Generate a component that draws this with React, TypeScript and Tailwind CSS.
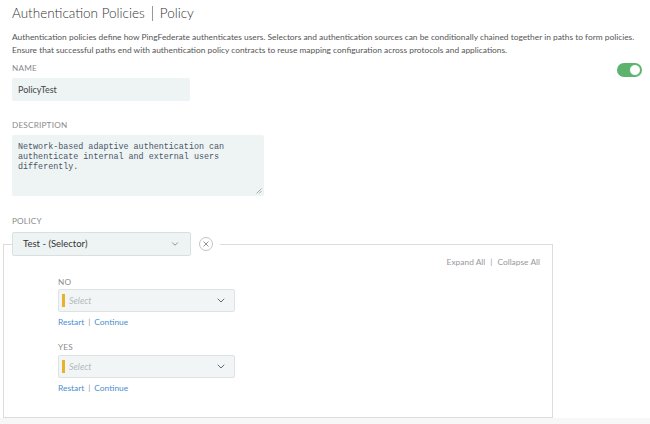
import { ChevronDown } from "lucide-react";

const ui = "font-['Lato','Open_Sans',sans-serif]";

function Label({ children, className = "" }: { children: string; className?: string }) {
  return (
    <div className={`text-[8.2px] leading-[12px] uppercase tracking-[0.2px] text-[#8a8a8a] ${className}`}>
      {children}
    </div>
  );
}

function Chevron() {
  return (
    <svg width="8" height="5" viewBox="0 0 8 5" fill="none">
      <path d="M1 1l3 3 3-3" stroke="#667" strokeWidth="1" strokeLinecap="round" strokeLinejoin="round" />
    </svg>
  );
}

function BranchSelect() {
  return (
    <div className="flex h-[23px] w-[177px] items-center rounded-[2px] border border-[#dde3e3] bg-[#f1f5f5] pl-[3px] pr-[9px]">
      <span className="h-[13px] w-[3px] bg-[#e8b32b]" />
      <span className="ml-[4px] flex-1 text-[9px] italic text-[#b4babd]">Select</span>
      <Chevron />
    </div>
  );
}

function Links({ className = "" }: { className?: string }) {
  return (
    <div className={`flex items-center text-[8.4px] leading-[12px] text-[#4a8fcf] ${className}`}>
      <span>Restart</span>
      <span className="mx-[4px] text-[#999]">|</span>
      <span>Continue</span>
    </div>
  );
}

export default function App() {
  return (
    <div className={`flex h-[424px] w-[650px] flex-col overflow-hidden bg-white ${ui}`}>
      <div className="pl-3 pr-2 pt-[3px]">
        <h1 className="flex items-center text-[13.5px] font-light leading-5 text-[#333]">
          <span>Authentication Policies</span>
          <span className="mx-[7px] h-[15px] w-px bg-[#999]" />
          <span>Policy</span>
        </h1>
        <p className="mt-[7.5px] whitespace-nowrap text-[8.4px] leading-[13px] text-[#555]">
          Authentication policies define how PingFederate authenticates users. Selectors and authentication
          sources can be conditionally chained together in paths to form policies.
          <br />
          Ensure that successful paths end with authentication policy contracts to reuse mapping configuration
          across protocols and applications.
        </p>

        <div className="mt-[5.5px] flex items-start justify-between">
          <Label>Name</Label>
          <div className="mt-[1px] flex h-[14px] w-[25px] items-center justify-end rounded-full bg-[#5bb36d] pr-[1px]">
            <span className="h-[12px] w-[12px] rounded-full border border-[#5bb36d] bg-white" />
          </div>
        </div>
        <div className="mt-[1px] flex h-[23px] w-[178px] items-center rounded-[2px] bg-[#eef4f4] pl-[6px] text-[9px] text-[#444]">
          PolicyTest
        </div>

        <Label className="mt-[18px]">Description</Label>
        <div className="relative mt-[4px] h-[61px] w-[252px] rounded-[2px] bg-[#eef4f4] px-[6px] pt-[8px] font-['Liberation_Mono',monospace] text-[8.4px] leading-[9.8px] text-[#4a5566]">
          Network-based adaptive authentication can
          <br />
          authenticate internal and external users
          <br />
          differently.
          <svg className="absolute bottom-[2px] right-[2px]" width="6" height="6" viewBox="0 0 6 6">
            <path d="M5.5 0.5L0.5 5.5M5.5 3L3 5.5" stroke="#999" strokeWidth="0.8" />
          </svg>
        </div>

        <Label className="mt-[19px]">Policy</Label>
        <div className="-ml-[9px] mt-[17px] w-[550px] border border-[#dcdcdc] pb-[23px]">
          <div className="-mt-[13px] ml-[8px] flex w-fit items-center bg-white pr-[7px]">
            <div className="flex h-[24px] w-[179px] items-center justify-between rounded-[2px] border border-[#d8e0e0] bg-[#eef4f4] pl-[10px] pr-[10px] text-[9.5px] text-[#333]">
              <span>Test - (Selector)</span>
              <ChevronDown size={10} strokeWidth={1.5} className="text-[#556]" />
            </div>
            <div className="ml-[8px] flex h-[14px] w-[14px] items-center justify-center rounded-full border border-[#c4c4c4]">
              <svg width="6" height="6" viewBox="0 0 6 6">
                <path d="M0.5 0.5l5 5M5.5 0.5l-5 5" stroke="#888" strokeWidth="0.9" />
              </svg>
            </div>
          </div>

          <div className="flex justify-end pr-[12px] text-[8.4px] leading-[12px] text-[#999]">
            <span>Expand All</span>
            <span className="mx-[5px]">|</span>
            <span>Collapse All</span>
          </div>

          <div className="pl-[54px]">
            <Label className="mt-[8px]">No</Label>
            <div className="mt-[1px]">
              <BranchSelect />
            </div>
            <Links className="mt-[4px]" />

            <Label className="mt-[13px]">Yes</Label>
            <div className="mt-[2px]">
              <BranchSelect />
            </div>
            <Links className="mt-[4px]" />
          </div>
        </div>
      </div>
      <div className="flex-1 bg-[#f7f7f7]" />
    </div>
  );
}
